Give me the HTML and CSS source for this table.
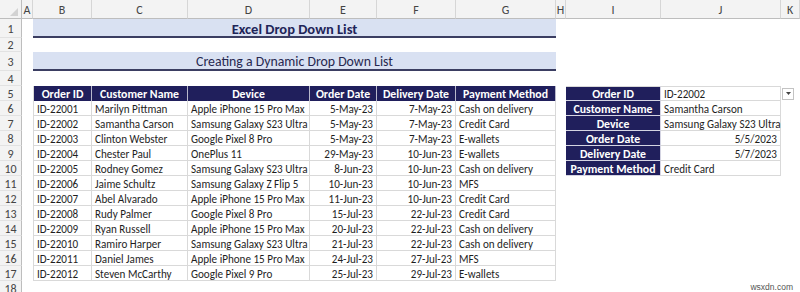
FILE: index.html
```html
<!DOCTYPE html>
<html>
<head>
<meta charset="utf-8">
<link rel="stylesheet" href="styles.css">
</head>
<body>
<div class="sheet">
  <!-- column headers -->
  <div class="ch corner"><span class="tri"></span></div>
  <div class="ch">A</div><div class="ch">B</div><div class="ch">C</div><div class="ch">D</div><div class="ch">E</div><div class="ch">F</div><div class="ch">G</div><div class="ch">H</div><div class="ch">I</div><div class="ch">J</div><div class="ch">K</div>

  <!-- row 1 -->
  <div class="rh">1</div><div class="c"></div>
  <div class="title">Excel Drop Down List</div>
  <div class="c"></div><div class="c"></div><div class="c"></div><div class="c"></div>

  <!-- row 2 -->
  <div class="rh">2</div><div class="c"></div><div class="c"></div><div class="c"></div><div class="c"></div><div class="c"></div><div class="c"></div><div class="c"></div><div class="c"></div><div class="c"></div><div class="c"></div><div class="c"></div>

  <!-- row 3 -->
  <div class="rh">3</div><div class="c"></div>
  <div class="title sub">Creating a Dynamic Drop Down List</div>
  <div class="c"></div><div class="c"></div><div class="c"></div><div class="c"></div>

  <!-- row 4 -->
  <div class="rh">4</div><div class="c"></div><div class="c"></div><div class="c"></div><div class="c"></div><div class="c"></div><div class="c"></div><div class="c"></div><div class="c"></div><div class="c"></div><div class="c"></div><div class="c"></div>

  <!-- row 5 -->
  <div class="rh">5</div><div class="c"></div>
  <div class="th first">Order ID</div><div class="th">Customer Name</div><div class="th">Device</div><div class="th">Order Date</div><div class="th">Delivery Date</div><div class="th">Payment Method</div>
  <div class="c"></div>
  <div class="lb top">Order ID</div><div class="val top">ID-22002</div>
  <div class="c dd-cell"><span class="dd"><svg width="5" height="3" viewBox="0 0 5 3"><path d="M0 0H5L2.5 3Z" fill="#444"/></svg></span></div>

  <!-- row 6 -->
  <div class="rh">6</div><div class="c"></div>
  <div class="td first">ID-22001</div><div class="td">Marilyn Pittman</div><div class="td">Apple iPhone 15 Pro Max</div><div class="td num">5-May-23</div><div class="td num">7-May-23</div><div class="td">Cash on delivery</div>
  <div class="c"></div>
  <div class="lb">Customer Name</div><div class="val">Samantha Carson</div><div class="c"></div>

  <!-- row 7 -->
  <div class="rh">7</div><div class="c"></div>
  <div class="td first">ID-22002</div><div class="td">Samantha Carson</div><div class="td">Samsung Galaxy S23 Ultra</div><div class="td num">5-May-23</div><div class="td num">7-May-23</div><div class="td">Credit Card</div>
  <div class="c"></div>
  <div class="lb">Device</div><div class="val">Samsung Galaxy S23 Ultra</div><div class="c"></div>

  <!-- row 8 -->
  <div class="rh">8</div><div class="c"></div>
  <div class="td first">ID-22003</div><div class="td">Clinton Webster</div><div class="td">Google Pixel 8 Pro</div><div class="td num">5-May-23</div><div class="td num">7-May-23</div><div class="td">E-wallets</div>
  <div class="c"></div>
  <div class="lb">Order Date</div><div class="val num">5/5/2023</div><div class="c"></div>

  <!-- row 9 -->
  <div class="rh">9</div><div class="c"></div>
  <div class="td first">ID-22004</div><div class="td">Chester Paul</div><div class="td">OnePlus 11</div><div class="td num">29-May-23</div><div class="td num">10-Jun-23</div><div class="td">E-wallets</div>
  <div class="c"></div>
  <div class="lb">Delivery Date</div><div class="val num">5/7/2023</div><div class="c"></div>

  <!-- row 10 -->
  <div class="rh">10</div><div class="c"></div>
  <div class="td first">ID-22005</div><div class="td">Rodney Gomez</div><div class="td">Samsung Galaxy S23 Ultra</div><div class="td num">8-Jun-23</div><div class="td num">10-Jun-23</div><div class="td">Cash on delivery</div>
  <div class="c"></div>
  <div class="lb">Payment Method</div><div class="val">Credit Card</div><div class="c"></div>

  <!-- row 11 -->
  <div class="rh">11</div><div class="c"></div>
  <div class="td first">ID-22006</div><div class="td">Jaime Schultz</div><div class="td">Samsung Galaxy Z Flip 5</div><div class="td num">10-Jun-23</div><div class="td num">10-Jun-23</div><div class="td">MFS</div>
  <div class="c"></div><div class="c"></div><div class="c"></div><div class="c"></div>

  <!-- row 12 -->
  <div class="rh">12</div><div class="c"></div>
  <div class="td first">ID-22007</div><div class="td">Abel Alvarado</div><div class="td">Apple iPhone 15 Pro Max</div><div class="td num">11-Jun-23</div><div class="td num">10-Jun-23</div><div class="td">Credit Card</div>
  <div class="c"></div><div class="c"></div><div class="c"></div><div class="c"></div>

  <!-- row 13 -->
  <div class="rh">13</div><div class="c"></div>
  <div class="td first">ID-22008</div><div class="td">Rudy Palmer</div><div class="td">Google Pixel 8 Pro</div><div class="td num">15-Jul-23</div><div class="td num">22-Jul-23</div><div class="td">Credit Card</div>
  <div class="c"></div><div class="c"></div><div class="c"></div><div class="c"></div>

  <!-- row 14 -->
  <div class="rh">14</div><div class="c"></div>
  <div class="td first">ID-22009</div><div class="td">Ryan Russell</div><div class="td">Apple iPhone 15 Pro Max</div><div class="td num">20-Jul-23</div><div class="td num">22-Jul-23</div><div class="td">Cash on delivery</div>
  <div class="c"></div><div class="c"></div><div class="c"></div><div class="c"></div>

  <!-- row 15 -->
  <div class="rh">15</div><div class="c"></div>
  <div class="td first">ID-22010</div><div class="td">Ramiro Harper</div><div class="td">Samsung Galaxy S23 Ultra</div><div class="td num">21-Jul-23</div><div class="td num">22-Jul-23</div><div class="td">Cash on delivery</div>
  <div class="c"></div><div class="c"></div><div class="c"></div><div class="c"></div>

  <!-- row 16 -->
  <div class="rh">16</div><div class="c"></div>
  <div class="td first">ID-22011</div><div class="td">Daniel James</div><div class="td">Apple iPhone 15 Pro Max</div><div class="td num">24-Jul-23</div><div class="td num">27-Jul-23</div><div class="td">MFS</div>
  <div class="c"></div><div class="c"></div><div class="c"></div><div class="c"></div>

  <!-- row 17 -->
  <div class="rh">17</div><div class="c"></div>
  <div class="td first">ID-22012</div><div class="td">Steven McCarthy</div><div class="td">Google Pixel 9 Pro</div><div class="td num">25-Jul-23</div><div class="td num">29-Jul-23</div><div class="td">E-wallets</div>
  <div class="c"></div><div class="c"></div><div class="c"></div><div class="c"></div>

  <!-- row 18 -->
  <div class="rh">18</div><div class="c"></div><div class="c"></div><div class="c"></div><div class="c"></div><div class="c"></div><div class="c"></div><div class="c"></div><div class="c"></div><div class="c"></div>
  <div class="wm">wsxdn.com</div>
</div>
</body>
</html>
```
FILE: styles.css
```css
* { box-sizing: border-box; }
html, body { margin: 0; padding: 0; background: #fff; overflow: hidden; }
body { width: 800px; height: 292px; }

.sheet {
  display: grid;
  grid-template-columns: 22px 11px 59px 96px 122px 67px 79px 100px 10px 95px 120px 19px;
  grid-template-rows: 19px 19px 14px 19px 15px repeat(14, 15px);
  font-family: "Carlito", "Calibri", "Lato", sans-serif;
  font-size: 11.1px;
  color: #1e1e1e;
  width: 800px;
}

.ch {
  background: #f3f3f3;
  border-right: 1px solid #d6d6d6;
  border-bottom: 1px solid #bdbdbd;
  color: #444;
  font-size: 12px;
  display: flex;
  align-items: center;
  justify-content: center;
  padding-top: 2px;
}
.corner { position: relative; border-right: 1px solid #bdbdbd; }
.tri {
  position: absolute;
  right: 3px;
  bottom: 2px;
  width: 0; height: 0;
  border-left: 8px solid transparent;
  border-bottom: 8px solid #d2d2d2;
}

.rh {
  background: #f3f3f3;
  border-right: 1px solid #bdbdbd;
  border-bottom: 1px solid #e2e2e2;
  color: #444;
  font-size: 12px;
  line-height: 12px;
  display: flex;
  align-items: center;
  justify-content: center;
  padding-top: 1px;
}

.title {
  grid-column: span 6;
  background: #d9e1f2;
  border-bottom: 2px solid #3b3e62;
  color: #1f2559;
  font-weight: 700;
  font-size: 14.5px;
  display: flex;
  align-items: center;
  justify-content: center;
  padding-top: 2px;
}
.title.sub {
  font-weight: 400;
  font-size: 13.8px;
  color: #27284f;
}

.th {
  background: #201f5c;
  color: #fff;
  font-weight: 700;
  font-size: 11.8px;
  display: flex;
  align-items: center;
  justify-content: center;
  border-right: 1px solid #b9b9cc;
  padding-top: 1px;
  white-space: nowrap;
}

.td {
  border-right: 1px solid #d9d9d9;
  border-bottom: 1px solid #d9d9d9;
  display: flex;
  align-items: center;
  padding: 1px 3px 0 3px;
  white-space: nowrap;
  overflow: hidden;
}
.first { border-left: 1px solid #d9d9d9; }
.num { justify-content: flex-end; }

.lb {
  background: #201f5c;
  color: #fff;
  font-weight: 700;
  font-size: 11.8px;
  display: flex;
  align-items: center;
  justify-content: center;
  border-bottom: 1px solid #d4d4e2;
  border-right: 1px solid #d4d4e2;
  padding-top: 1px;
  white-space: nowrap;
}
.val {
  border-right: 1px solid #d9d9d9;
  border-bottom: 1px solid #d9d9d9;
  display: flex;
  align-items: center;
  padding: 1px 3px 0 3px;
  white-space: nowrap;
}
.top { border-top: 1px solid #d9d9d9; }

.dd-cell { display: flex; align-items: center; padding-left: 1px; }
.dd {
  width: 12px;
  height: 12px;
  border: 1px solid #c3c3c3;
  background: #fff;
  display: flex;
  align-items: center;
  justify-content: center;
}

.wm {
  grid-column: span 2;
  font-family: "Liberation Sans", sans-serif;
  font-size: 8.5px;
  line-height: 10px;
  color: #555;
  text-align: right;
  padding: 1px 7px 0 0;
}
```
